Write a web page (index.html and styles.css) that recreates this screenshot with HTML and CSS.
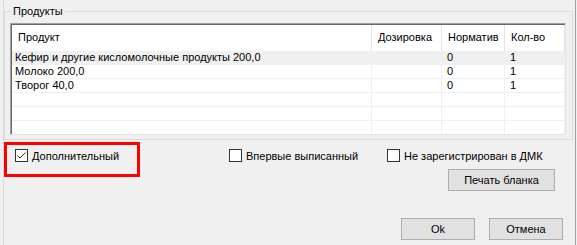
FILE: index.html
```html
<!DOCTYPE html>
<html>
  <head>
    <title>Продукты</title>
    <link rel="stylesheet" href="styles.css">
  </head>
  <body>
    <div class="window">
      <fieldset class="group">
        <legend>Продукты</legend>
        <div class="list">
          <div class="list-head">
            <div class="cell">Продукт</div>
            <div class="cell">Дозировка</div>
            <div class="cell">Норматив</div>
            <div class="cell">Кол-во</div>
          </div>
          <div class="list-row selected">
            <div class="cell first">Кефир и другие кисломолочные продукты 200,0</div>
            <div class="cell"></div>
            <div class="cell">0</div>
            <div class="cell">1</div>
          </div>
          <div class="list-row">
            <div class="cell first">Молоко 200,0</div>
            <div class="cell"></div>
            <div class="cell">0</div>
            <div class="cell">1</div>
          </div>
          <div class="list-row">
            <div class="cell first">Творог 40,0</div>
            <div class="cell"></div>
            <div class="cell">0</div>
            <div class="cell">1</div>
          </div>
          <div class="list-row">
            <div class="cell first"></div>
            <div class="cell"></div>
            <div class="cell"></div>
            <div class="cell"></div>
          </div>
          <div class="list-row">
            <div class="cell first"></div>
            <div class="cell"></div>
            <div class="cell"></div>
            <div class="cell"></div>
          </div>
          <div class="list-row">
            <div class="cell first"></div>
            <div class="cell"></div>
            <div class="cell"></div>
            <div class="cell"></div>
          </div>
        </div>
      </fieldset>

      <div class="options">
        <div class="highlight">
          <label class="check">
            <span class="box">
              <svg width="11" height="11" viewBox="0 0 11 11">
                <polyline points="1.5,5.5 4,8 9.5,2.5" fill="none" stroke="#333" stroke-width="1" />
              </svg>
            </span>
            Дополнительный
          </label>
        </div>
        <label class="check check-first">
          <span class="box"></span>
          Впервые выписанный
        </label>
        <div class="right-opts">
          <label class="check">
            <span class="box"></span>
            Не зарегистрирован в ДМК
          </label>
          <button class="btn btn-print">Печать бланка</button>
        </div>
      </div>

      <div class="footer">
        <button class="btn">Ok</button>
        <button class="btn">Отмена</button>
      </div>
    </div>
  </body>
</html>
```

FILE: styles.css
```css
body {
  margin: 0;
  background: #f0f0f0;
  font-family: "Liberation Sans", Arial, sans-serif;
  font-size: 11px;
  color: #000;
}

.window {
  box-sizing: border-box;
  width: 573px;
  height: 245px;
  margin-left: 3px;
  border-left: 1px solid #dadada;
  border-right: 1px solid #a0a0a0;
  padding-right: 2px;
  overflow: hidden;
}

.group {
  margin: 4px 0 0 0;
  padding: 0 0 4px 0;
  border: 1px solid #dcdcdc;
  min-width: 0;
}

.group legend {
  margin-left: 6px;
  padding: 0 2px;
  line-height: 14px;
}

.list {
  box-sizing: border-box;
  width: 556px;
  height: 112px;
  margin: 5px 0 0 5px;
  padding: 1px 0 0 1px;
  background: #fff;
  border: 1px solid;
  border-color: #a0a0a0 #e3e3e3 #e3e3e3 #a0a0a0;
  box-shadow: inset 1px 1px 0 #696969;
  overflow: hidden;
}

.list-head,
.list-row {
  display: grid;
  grid-template-columns: 360px 70px 63px 60px;
}

.list-head {
  height: 26px;
}

.list-head .cell {
  border-right: 1px solid #e5e5e5;
  padding-left: 6px;
  line-height: 24px;
}

.list-row {
  height: 14px;
}

.list-row .cell {
  border-right: 1px solid #f0f0f0;
  border-bottom: 1px solid #f0f0f0;
  padding-left: 5px;
  line-height: 13px;
  white-space: nowrap;
}

.list-row .cell.first {
  padding-left: 3px;
}

.list-row.selected {
  background: #f0f0f0;
}

.options {
  display: flex;
  align-items: flex-start;
  margin-top: 2px;
}

.highlight {
  box-sizing: border-box;
  width: 136px;
  height: 35px;
  border: 3px solid #ff0000;
  padding: 4px 0 0 8px;
}

.check {
  display: flex;
  align-items: center;
  height: 13px;
  gap: 4px;
  white-space: nowrap;
}

.box {
  box-sizing: border-box;
  width: 13px;
  height: 13px;
  border: 1px solid #333;
  background: #fff;
  display: flex;
}

.check-first {
  margin: 7px 0 0 89px;
}

.right-opts {
  display: flex;
  flex-direction: column;
  align-items: flex-start;
  width: 168px;
  margin: 7px 18px 0 auto;
}

.btn {
  box-sizing: border-box;
  height: 22px;
  background: #e1e1e1;
  border: 1px solid #adadad;
  font-family: inherit;
  font-size: 11px;
  color: #000;
  padding: 0;
}

.btn-print {
  width: 107px;
  margin-top: 7px;
  align-self: flex-end;
}

.footer {
  display: flex;
  justify-content: flex-end;
  gap: 14px;
  margin: 27px 10px 0 0;
}

.footer .btn {
  width: 74px;
}
```
